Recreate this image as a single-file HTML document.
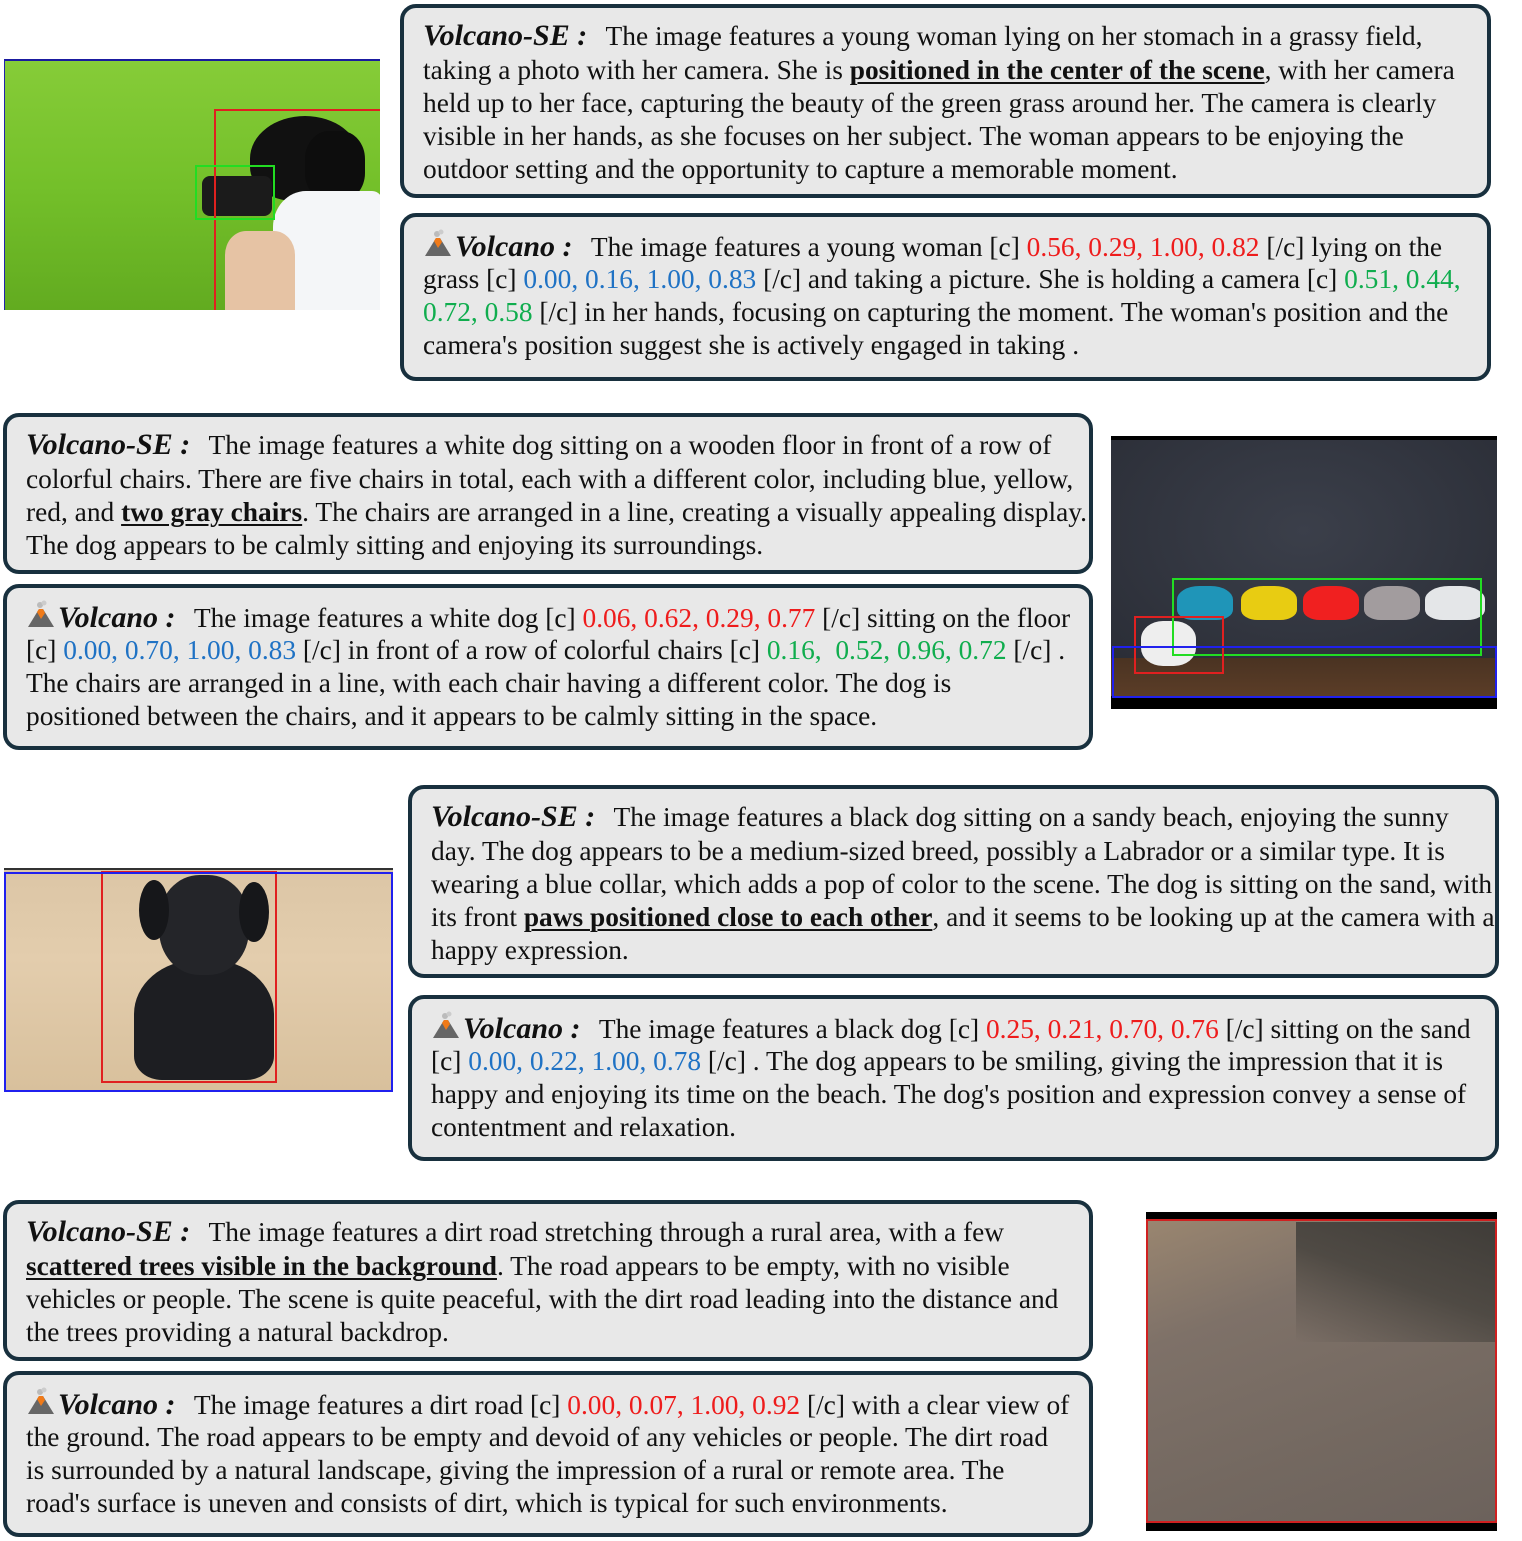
<!DOCTYPE html>
<html><head><meta charset="utf-8">
<style>
body{margin:0;width:1522px;height:1541px;background:#fff;position:relative;overflow:hidden;font-family:"Liberation Serif",serif;color:#111}
.box{position:absolute;box-sizing:border-box;background:#e8e8e8;border:4px solid #18303e;border-radius:16px;font-size:27.4px;line-height:33px;white-space:nowrap;padding:11px 0 0 19px}
.t{font-weight:bold;font-style:italic;font-size:30px;margin-right:12px}
.l{display:block;height:33px}
.l1{height:35px}
.r{color:#ee1c1c}.b{color:#1f72c4}.g{color:#10ad4e}
u{font-weight:bold;text-decoration-thickness:2px;text-underline-offset:3px}
.img{position:absolute;overflow:hidden}
.bb{position:absolute;box-sizing:border-box;border:2px solid}
svg.v{width:30px;height:30px;vertical-align:-2px;margin-right:2px}
</style></head><body>

<!-- Block 1 -->
<div class="img" style="left:4px;top:59px;width:375px;height:249px;background:linear-gradient(180deg,#86cc38 0%,#74c02a 50%,#62ab20 100%);border-top:2px solid #1a1aa0;border-left:1px solid #2222aa">
 <div style="position:absolute;left:245px;top:55px;width:110px;height:85px;border-radius:50% 50% 40% 40%;background:#111"></div>
 <div style="position:absolute;left:300px;top:70px;width:60px;height:70px;border-radius:40%;background:#0d0d0d"></div>
 <div style="position:absolute;left:268px;top:130px;width:110px;height:120px;border-radius:30% 10% 0 0;background:#f4f6f8"></div>
 <div style="position:absolute;left:220px;top:170px;width:70px;height:80px;border-radius:30% 30% 0 0;background:#e6c3a4"></div>
 <div style="position:absolute;left:197px;top:115px;width:70px;height:40px;border-radius:8px;background:#1b1b1b"></div>
 <div class="bb" style="left:209px;top:48px;width:170px;height:205px;border-color:#e02020"></div>
 <div class="bb" style="left:190px;top:104px;width:80px;height:55px;border-color:#22dd22"></div>
</div>
<div class="box" style="left:400px;top:4px;width:1091px;height:194px">
 <span class="l l1"><span class="t">Volcano-SE :</span> The image features a young woman lying on her stomach in a grassy field,</span>
 <span class="l">taking a photo with her camera. She is <u>positioned in the center of the scene</u>, with her camera</span>
 <span class="l">held up to her face, capturing the beauty of the green grass around her. The camera is clearly</span>
 <span class="l">visible in her hands, as she focuses on her subject. The woman appears to be enjoying the</span>
 <span class="l">outdoor setting and the opportunity to capture a memorable moment.</span>
</div>
<div class="box" style="left:400px;top:213px;width:1091px;height:168px">
 <span class="l l1"><svg class="v" viewBox="0 0 30 30"><path d="M2 28 L13 10 L17 10 L28 28Z" fill="#666"/><path d="M11 13 L13 10 L17 10 L19 14 L15 20Z" fill="#f07a18"/><circle cx="14" cy="6" r="3" fill="#bbb"/><circle cx="18" cy="4" r="2.5" fill="#ccc"/></svg><span class="t">Volcano :</span> The image features a young woman [c] <span class="r">0.56, 0.29, 1.00, 0.82</span> [/c] lying on the</span>
 <span class="l">grass [c] <span class="b">0.00, 0.16, 1.00, 0.83</span> [/c] and taking a picture. She is holding a camera [c] <span class="g">0.51, 0.44,</span></span>
 <span class="l"><span class="g">0.72, 0.58</span> [/c] in her hands, focusing on capturing the moment. The woman's position and the</span>
 <span class="l">camera's position suggest she is actively engaged in taking .</span>
</div>

<!-- Block 2 -->
<div class="box" style="left:3px;top:413px;width:1090px;height:161px">
 <span class="l l1"><span class="t">Volcano-SE :</span> The image features a white dog sitting on a wooden floor in front of a row of</span>
 <span class="l">colorful chairs. There are five chairs in total, each with a different color, including blue, yellow,</span>
 <span class="l">red, and <u>two gray chairs</u>. The chairs are arranged in a line, creating a visually appealing display.</span>
 <span class="l">The dog appears to be calmly sitting and enjoying its surroundings.</span>
</div>
<div class="box" style="left:3px;top:584px;width:1090px;height:166px">
 <span class="l l1"><svg class="v" viewBox="0 0 30 30"><path d="M2 28 L13 10 L17 10 L28 28Z" fill="#666"/><path d="M11 13 L13 10 L17 10 L19 14 L15 20Z" fill="#f07a18"/><circle cx="14" cy="6" r="3" fill="#bbb"/><circle cx="18" cy="4" r="2.5" fill="#ccc"/></svg><span class="t">Volcano :</span> The image features a white dog [c] <span class="r">0.06, 0.62, 0.29, 0.77</span> [/c] sitting on the floor</span>
 <span class="l">[c] <span class="b">0.00, 0.70, 1.00, 0.83</span> [/c] in front of a row of colorful chairs [c] <span class="g">0.16,&nbsp; 0.52, 0.96, 0.72</span> [/c] .</span>
 <span class="l">The chairs are arranged in a line, with each chair having a different color. The dog is</span>
 <span class="l">positioned between the chairs, and it appears to be calmly sitting in the space.</span>
</div>
<div class="img" style="left:1111px;top:436px;width:386px;height:273px;background:#000">
 <div style="position:absolute;left:0;top:4px;width:386px;height:226px;background:radial-gradient(ellipse at 50% 40%,#3b3f4a,#2a2d36)"></div>
 <div style="position:absolute;left:0;top:222px;width:386px;height:38px;background:linear-gradient(180deg,#4a3322,#5b3d27)"></div>
 <div style="position:absolute;left:66px;top:150px;width:56px;height:34px;border-radius:40% 40% 30% 30%;background:#1f95b8"></div>
 <div style="position:absolute;left:130px;top:150px;width:56px;height:34px;border-radius:40% 40% 30% 30%;background:#e8cc12"></div>
 <div style="position:absolute;left:192px;top:150px;width:56px;height:34px;border-radius:40% 40% 30% 30%;background:#f02020"></div>
 <div style="position:absolute;left:253px;top:150px;width:56px;height:34px;border-radius:40% 40% 30% 30%;background:#a29c9e"></div>
 <div style="position:absolute;left:314px;top:150px;width:60px;height:34px;border-radius:40% 40% 30% 30%;background:#e4e6e8"></div>
 <div style="position:absolute;left:30px;top:185px;width:55px;height:45px;border-radius:40%;background:#eee"></div>
 <div class="bb" style="left:61px;top:142px;width:310px;height:78px;border-color:#22dd22"></div>
 <div class="bb" style="left:23px;top:180px;width:90px;height:58px;border-color:#e02020"></div>
 <div class="bb" style="left:1px;top:210px;width:385px;height:52px;border-color:#2020ee"></div>
</div>

<!-- Block 3 -->
<div class="img" style="left:4px;top:868px;width:389px;height:222px;background:linear-gradient(180deg,#dcc6a6,#e3cdad 40%,#d8c09c);border-top:2px solid #333">
 <div style="position:absolute;left:130px;top:90px;width:140px;height:120px;border-radius:45% 45% 20% 20%;background:#1d1e22"></div>
 <div style="position:absolute;left:155px;top:5px;width:90px;height:100px;border-radius:45%;background:#242529"></div>
 <div style="position:absolute;left:135px;top:10px;width:30px;height:60px;border-radius:50%;background:#16171a"></div>
 <div style="position:absolute;left:235px;top:12px;width:30px;height:60px;border-radius:50%;background:#16171a"></div>
 <div class="bb" style="left:97px;top:1px;width:176px;height:212px;border-color:#e02020"></div>
 <div class="bb" style="left:0;top:2px;width:389px;height:220px;border-color:#2020ee"></div>
</div>
<div class="box" style="left:408px;top:785px;width:1091px;height:193px">
 <span class="l l1"><span class="t">Volcano-SE :</span> The image features a black dog sitting on a sandy beach, enjoying the sunny</span>
 <span class="l">day. The dog appears to be a medium-sized breed, possibly a Labrador or a similar type. It is</span>
 <span class="l">wearing a blue collar, which adds a pop of color to the scene. The dog is sitting on the sand, with</span>
 <span class="l">its front <u>paws positioned close to each other</u>, and it seems to be looking up at the camera with a</span>
 <span class="l">happy expression.</span>
</div>
<div class="box" style="left:408px;top:995px;width:1091px;height:166px">
 <span class="l l1"><svg class="v" viewBox="0 0 30 30"><path d="M2 28 L13 10 L17 10 L28 28Z" fill="#666"/><path d="M11 13 L13 10 L17 10 L19 14 L15 20Z" fill="#f07a18"/><circle cx="14" cy="6" r="3" fill="#bbb"/><circle cx="18" cy="4" r="2.5" fill="#ccc"/></svg><span class="t">Volcano :</span> The image features a black dog [c] <span class="r">0.25, 0.21, 0.70, 0.76</span> [/c] sitting on the sand</span>
 <span class="l">[c] <span class="b">0.00, 0.22, 1.00, 0.78</span> [/c] . The dog appears to be smiling, giving the impression that it is</span>
 <span class="l">happy and enjoying its time on the beach. The dog's position and expression convey a sense of</span>
 <span class="l">contentment and relaxation.</span>
</div>

<!-- Block 4 -->
<div class="box" style="left:3px;top:1200px;width:1090px;height:161px">
 <span class="l l1"><span class="t">Volcano-SE :</span> The image features a dirt road stretching through a rural area, with a few</span>
 <span class="l"><u>scattered trees visible in the background</u>. The road appears to be empty, with no visible</span>
 <span class="l">vehicles or people. The scene is quite peaceful, with the dirt road leading into the distance and</span>
 <span class="l">the trees providing a natural backdrop.</span>
</div>
<div class="box" style="left:3px;top:1371px;width:1090px;height:166px">
 <span class="l l1"><svg class="v" viewBox="0 0 30 30"><path d="M2 28 L13 10 L17 10 L28 28Z" fill="#666"/><path d="M11 13 L13 10 L17 10 L19 14 L15 20Z" fill="#f07a18"/><circle cx="14" cy="6" r="3" fill="#bbb"/><circle cx="18" cy="4" r="2.5" fill="#ccc"/></svg><span class="t">Volcano :</span> The image features a dirt road [c] <span class="r">0.00, 0.07, 1.00, 0.92</span> [/c] with a clear view of</span>
 <span class="l">the ground. The road appears to be empty and devoid of any vehicles or people. The dirt road</span>
 <span class="l">is surrounded by a natural landscape, giving the impression of a rural or remote area. The</span>
 <span class="l">road's surface is uneven and consists of dirt, which is typical for such environments.</span>
</div>
<div class="img" style="left:1146px;top:1212px;width:351px;height:319px;background:#000">
 <div style="position:absolute;left:0;top:7px;width:351px;height:303px;background:linear-gradient(160deg,#9a8670 0%,#7e7168 30%,#736860 70%,#6c625c 100%)"></div>
 <div style="position:absolute;left:150px;top:10px;width:201px;height:120px;background:linear-gradient(200deg,#3f3c38 0%,#4f4a44 50%,rgba(110,100,92,0) 100%)"></div>
 <div class="bb" style="left:0;top:7px;width:351px;height:304px;border-color:#d02020"></div>
</div>
</body></html>
